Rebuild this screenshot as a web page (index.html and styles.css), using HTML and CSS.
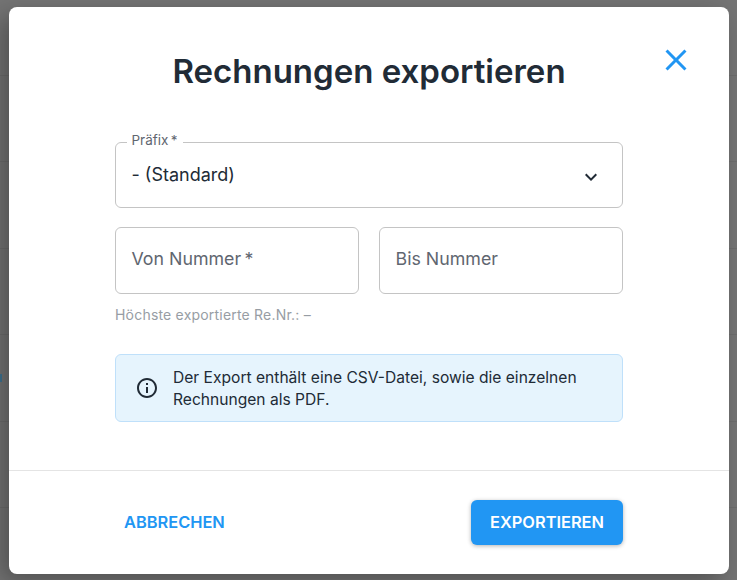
FILE: index.html
```html
<!DOCTYPE html>
<html lang="de">
<head>
    <meta charset="UTF-8">
    <meta name="viewport" content="width=device-width, initial-scale=1.0">
    <title>Rechnungen exportieren</title>
    <link rel="stylesheet" href="styles.css">
</head>
<body>
    <!-- Tabelle hinter dem Dialog -->
    <div class="backdrop">
        <div class="backdrop-row"></div>
        <div class="backdrop-row"></div>
        <div class="backdrop-row"></div>
        <div class="backdrop-row"></div>
        <div class="backdrop-row"><span class="backdrop-link"></span></div>
        <div class="backdrop-row"></div>
    </div>

    <div class="dialog">
        <button class="close-button" aria-label="Schließen">
            <svg width="36" height="36" viewBox="0 0 24 24"><path d="M19 6.41 17.59 5 12 10.59 6.41 5 5 6.41 10.59 12 5 17.59 6.41 19 12 13.41 17.59 19 19 17.59 13.41 12z"/></svg>
        </button>

        <h1 class="dialog-title">Rechnungen exportieren</h1>

        <div class="dialog-content">
            <fieldset class="field field-select">
                <legend class="field-legend">Präfix&thinsp;*</legend>
                <span class="field-value">- (Standard)</span>
                <svg class="chevron" width="24" height="24" viewBox="0 0 24 24"><path d="M7.41 8.59 12 13.17l4.59-4.58L18 10l-6 6-6-6z"/></svg>
            </fieldset>

            <div class="field-row">
                <div class="field field-input">Von Nummer&thinsp;*</div>
                <div class="field field-input">Bis Nummer</div>
            </div>

            <p class="hint">Höchste exportierte Re.Nr.: –</p>

            <div class="info-box">
                <svg class="info-icon" width="24" height="24" viewBox="0 0 24 24"><path d="M11 7h2v2h-2zm0 4h2v6h-2zm1-9C6.48 2 2 6.48 2 12s4.48 10 10 10 10-4.48 10-10S17.52 2 12 2zm0 18c-4.41 0-8-3.59-8-8s3.59-8 8-8 8 3.59 8 8-3.59 8-8 8z"/></svg>
                <p class="info-text">Der Export enthält eine CSV-Datei, sowie die einzelnen Rechnungen als PDF.</p>
            </div>
        </div>

        <div class="dialog-actions">
            <button class="btn btn-text">Abbrechen</button>
            <button class="btn btn-primary">Exportieren</button>
        </div>
    </div>
</body>
</html>
```

FILE: styles.css
```css
* {
    box-sizing: border-box;
}

html,
body {
    height: 100%;
}

body {
    margin: 0;
    overflow: hidden;
    background-color: #747474;
    font-family: Inter, sans-serif;
    color: #212b36;
}

.backdrop {
    margin-top: -10.4px;
}

.backdrop-row {
    display: flex;
    align-items: center;
    height: 86.4px;
    border-bottom: 1px solid #6c6c6c;
}

.backdrop-link {
    width: 2px;
    height: 8px;
    background-color: #3f7391;
}

.dialog {
    position: absolute;
    top: 7px;
    left: 9px;
    width: 720px;
    height: 567px;
    display: flex;
    flex-direction: column;
    background-color: #fff;
    border-radius: 8px;
    box-shadow: -8px 8px 24px rgba(0, 0, 0, 0.3);
}

.close-button {
    position: absolute;
    top: 35px;
    right: 35px;
    width: 36px;
    height: 36px;
    padding: 0;
    border: none;
    background: none;
    fill: #2196f3;
}

.dialog-title {
    margin: 42px 0 0;
    font-size: 33px;
    line-height: 44px;
    font-weight: 600;
    text-align: center;
}

.dialog-content {
    flex: 1;
    padding: 0 106px;
}

.field {
    border: 1px solid #c4c4c4;
    border-radius: 6px;
    font-size: 17.8px;
    color: #5f6670;
}

.field-select {
    position: relative;
    height: 75px;
    margin: 40px 0 0;
    padding: 0 15.5px;
    min-width: 0;
}

.field-legend {
    padding: 0 5px 4px;
    margin-left: -5px;
    font-size: 13.5px;
    line-height: 14px;
}

.field-value {
    display: block;
    margin-top: 12px;
    font-size: 18px;
    line-height: 24px;
    color: #212b36;
}

.chevron {
    position: absolute;
    top: 14px;
    right: 19px;
    fill: #212b36;
}

.field-row {
    display: flex;
    gap: 20px;
    margin-top: 19px;
}

.field-input {
    flex: 1;
    height: 67px;
    padding: 20px 15.5px 0;
    line-height: 22px;
}

.hint {
    margin: 11px 0 0;
    font-size: 14px;
    letter-spacing: 0.2px;
    line-height: 20px;
    color: #979da4;
}

.info-box {
    display: flex;
    align-items: center;
    height: 68px;
    margin-top: 29px;
    padding: 0 18px 0 19px;
    background-color: #e6f4fd;
    border: 1px solid #bfe0fa;
    border-radius: 6px;
}

.info-icon {
    flex: none;
    fill: #212b36;
}

.info-text {
    margin: 1px 0 0 14px;
    font-size: 15.6px;
    line-height: 22px;
}

.dialog-actions {
    display: flex;
    justify-content: space-between;
    align-items: center;
    height: 104px;
    padding: 0 106px;
    border-top: 1px solid #e4e4e4;
}

.btn {
    height: 45px;
    padding: 0 19px 2px;
    border: none;
    border-radius: 6px;
    font-family: inherit;
    font-size: 16.4px;
    font-weight: 600;
    text-transform: uppercase;
}

.btn-text {
    padding: 0 10px 2px 9px;
    background: none;
    color: #2196f3;
}

.btn-primary {
    background-color: #2196f3;
    color: #fff;
    box-shadow: 0 1px 4px rgba(0, 0, 0, 0.3);
}
```
